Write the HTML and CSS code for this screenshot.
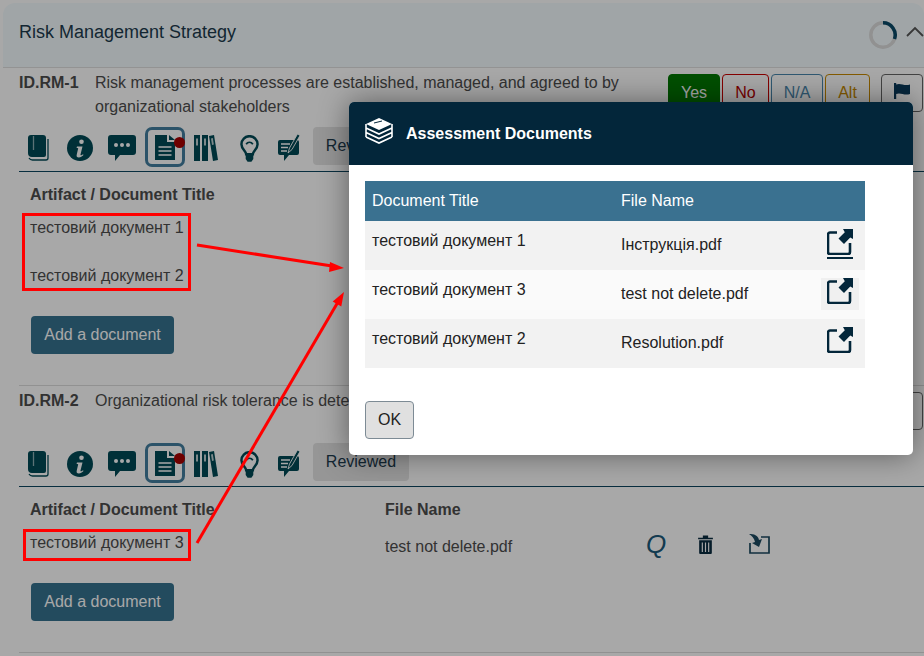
FILE: index.html
```html
<!DOCTYPE html>
<html lang="en">
<head>
<meta charset="utf-8">
<title>Risk Management Strategy</title>
<link rel="stylesheet" href="styles.css">
</head>
<body>
<svg width="0" height="0" class="defs">
  <defs>
    <symbol id="i-book" viewBox="0 0 21 26"><path d="M3 0h12a3 3 0 0 1 3 3v17a2 2 0 0 1-2 2H4a4 4 0 0 1-4-4V3a3 3 0 0 1 3-3z" fill="currentColor"/><path d="M5.500 1v14" stroke="#fff" stroke-width="1.300" opacity=".55"/><path d="M20 4v19a2 2 0 0 1-2 2H4.500a4 4 0 0 1-3.500-2" fill="none" stroke="currentColor" stroke-width="1.300"/></symbol>
    <symbol id="i-info" viewBox="0 0 26 26"><circle cx="13" cy="13" r="13" fill="currentColor"/><circle cx="14.500" cy="6.800" r="2.300" fill="#fff"/><path d="M10 11.500h5.500l-2 8c-.2.800.5 1 1 .7l1.500-1 .5.800c-1.500 1.600-3 2.500-4.700 2.500-1.800 0-2.500-1-2.100-2.700l1.500-6.500-1.700-.5z" fill="#fff"/></symbol>
    <symbol id="i-chat" viewBox="0 0 28 26"><path d="M3 0h22a3 3 0 0 1 3 3v14a3 3 0 0 1-3 3H12l-5 6v-6H3a3 3 0 0 1-3-3V3a3 3 0 0 1 3-3z" fill="currentColor"/><circle cx="8" cy="10" r="2" fill="#fff"/><circle cx="14" cy="10" r="2" fill="#fff"/><circle cx="20" cy="10" r="2" fill="#fff"/></symbol>
    <symbol id="i-doc" viewBox="0 0 20 25"><path d="M0 0h12v7h8v18H0z" fill="currentColor"/><path d="M14 0l6 5h-6z" fill="currentColor"/><path d="M3.500 12h13M3.500 16h13M3.500 20h13" stroke="#fff" stroke-width="1.600"/></symbol>
    <symbol id="i-lib" viewBox="0 0 24 26"><path d="M0 0h6v26H0zM8 0h6v26H8z" fill="currentColor"/><path d="M15 1l5-1 4 25-5 1z" fill="currentColor"/><path d="M2 3.500h2v7H2zM10 3.500h2v7h-2z" fill="#fff" opacity=".75"/><path d="M17 3.500l1.800-.4 1 6.500-1.800.4z" fill="#fff" opacity=".75"/></symbol>
    <symbol id="i-bulb" viewBox="0 0 20 28"><path d="M6.500 20c0-3-5-5.500-5-10.500a8.500 8.500 0 0 1 17 0c0 5-5 7.500-5 10.500z" fill="none" stroke="currentColor" stroke-width="2.600"/><path d="M6 20h8v5l-2 3H8l-2-3z" fill="currentColor"/><path d="M6.500 9.500a4 4 0 0 1 7 0" fill="none" stroke="currentColor" stroke-width="1.800"/></symbol>
    <symbol id="i-edit" viewBox="0 0 22 28"><path d="M2 7h17a2 2 0 0 1 2 2v11a2 2 0 0 1-2 2H11l-5 6v-6H2a2 2 0 0 1-2-2V9a2 2 0 0 1 2-2z" fill="currentColor"/><path d="M3 11h9M3 14.500h7M3 18h6" stroke="#fff" stroke-width="1.300"/><path d="M10 20l1.500-5L19.500 1l2.500 1.500-8 14z" fill="currentColor" stroke="#fff" stroke-width=".9"/></symbol>
    <symbol id="i-open" viewBox="0 0 26 26"><path d="M10 3.500H3a2 2 0 0 0-2 2V23a2 2 0 0 0 2 2h18a2 2 0 0 0 2-2V14" fill="none" stroke="currentColor" stroke-width="2.600"/><path d="M16 0h10v10l-2.800-1.500L17 15l-5.500-5.500 6.300-6.200z" fill="currentColor"/></symbol>
    <symbol id="i-flag" viewBox="0 0 16 16"><path d="M0 0h2.200v16H0z" fill="currentColor"/><path d="M2 1.500c5-2 8 2 14 0v9.500c-6 2-9-2-14 0z" fill="currentColor"/></symbol>
    <symbol id="i-trash" viewBox="0 0 14 18"><path d="M0 2.500h4.500V.5h5v2H14V4H0zM1 5h12v12a1 1 0 0 1-1 1H2a1 1 0 0 1-1-1z" fill="currentColor"/><path d="M4 7v9M7 7v9M10 7v9" stroke="#fff" stroke-width="1.100"/></symbol>
    <symbol id="i-import" viewBox="0 0 22 20"><path d="M13 3h8v16H2V9" fill="none" stroke="currentColor" stroke-width="1.700"/><path d="M1 0c5 0 9 1 10 6l3-1-3 8-7-4 3-1C6 4 4 2 1 0z" fill="currentColor"/></symbol>
  </defs>
</svg>

<main class="page">
  <header class="panel-head">
    <h1 class="panel-title">Risk Management Strategy</h1>
    <div class="panel-tools">
      <svg class="ring" width="28" height="28" viewBox="0 0 28 28"><circle cx="14" cy="14" r="12.200" fill="none" stroke="#dcdcdc" stroke-width="3.500"/><path d="M14 1.800A12.200 12.200 0 0 1 25.500 18" fill="none" stroke="#0a4a68" stroke-width="3.500"/></svg>
      <svg class="chevron" width="18" height="12" viewBox="0 0 18 12"><path d="M1 10l8-8 8 8" fill="none" stroke="#555" stroke-width="1.800"/></svg>
    </div>
  </header>

  <section class="item item-first">
    <div class="req">
      <strong class="req-code">ID.RM-1</strong>
      <p class="req-text">Risk management processes are established, managed, and agreed to by organizational stakeholders</p>
      <div class="answers">
        <button class="ans ans-yes">Yes</button>
        <button class="ans ans-no">No</button>
        <button class="ans ans-na">N/A</button>
        <button class="ans ans-alt">Alt</button>
        <button class="ans ans-flag"><svg width="16" height="16"><use href="#i-flag"/></svg></button>
      </div>
    </div>
    <div class="toolbar">
      <svg class="t-book" width="21" height="26"><use href="#i-book"/></svg>
      <svg class="t-info" width="26" height="26"><use href="#i-info"/></svg>
      <svg class="t-chat" width="28" height="26"><use href="#i-chat"/></svg>
      <span class="t-active"><svg width="20" height="25"><use href="#i-doc"/></svg><i class="dot"></i></span>
      <svg class="t-lib" width="24" height="26"><use href="#i-lib"/></svg>
      <svg class="t-bulb" width="19" height="27"><use href="#i-bulb"/></svg>
      <svg class="t-edit" width="22" height="28"><use href="#i-edit"/></svg>
      <button class="reviewed">Reviewed</button>
    </div>
    <div class="docs">
      <div class="doc-head"><b>Artifact / Document Title</b></div>
      <div class="doc-row"><span>тестовий документ 1</span></div>
      <div class="doc-row doc-row-next"><span>тестовий документ 2</span></div>
      <button class="add">Add a document</button>
    </div>
  </section>

  <section class="item">
    <div class="req">
      <strong class="req-code">ID.RM-2</strong>
      <p class="req-text">Organizational risk tolerance is determined and clearly expressed</p>
      <div class="answers">
        <button class="ans ans-yes">Yes</button>
        <button class="ans ans-no">No</button>
        <button class="ans ans-na">N/A</button>
        <button class="ans ans-alt">Alt</button>
        <button class="ans ans-flag"><svg width="16" height="16"><use href="#i-flag"/></svg></button>
      </div>
    </div>
    <div class="toolbar">
      <svg class="t-book" width="21" height="26"><use href="#i-book"/></svg>
      <svg class="t-info" width="26" height="26"><use href="#i-info"/></svg>
      <svg class="t-chat" width="28" height="26"><use href="#i-chat"/></svg>
      <span class="t-active"><svg width="20" height="25"><use href="#i-doc"/></svg><i class="dot"></i></span>
      <svg class="t-lib" width="24" height="26"><use href="#i-lib"/></svg>
      <svg class="t-bulb" width="19" height="27"><use href="#i-bulb"/></svg>
      <svg class="t-edit" width="22" height="28"><use href="#i-edit"/></svg>
      <button class="reviewed">Reviewed</button>
    </div>
    <div class="docs">
      <div class="doc-head"><b>Artifact / Document Title</b><b>File Name</b></div>
      <div class="doc-row">
        <span>тестовий документ 3</span><span class="doc-file">test not delete.pdf</span>
        <span class="doc-actions">
          <span class="act-q">Q</span>
          <svg class="act-trash" width="15" height="19"><use href="#i-trash"/></svg>
          <svg class="act-import" width="22" height="20"><use href="#i-import"/></svg>
        </span>
      </div>
      <button class="add">Add a document</button>
    </div>
  </section>
</main>

<div class="backdrop"></div>

<div class="modal">
  <div class="modal-head">
    <svg class="modal-icon" width="28" height="27" viewBox="0 0 28 27"><path d="M14 1l13 6-13 6L1 7z" fill="#fff"/><path d="M1 11l13 6 13-6M1 15.500l13 6 13-6M1 20l13 6 13-6M1 7v13M27 7v13" fill="none" stroke="#fff" stroke-width="1.600"/><path d="M9 6l8-2" stroke="#03263a" stroke-width="1"/></svg>
    <h2 class="modal-title">Assessment Documents</h2>
  </div>
  <div class="modal-body">
    <table class="tbl">
      <thead><tr><th class="c-title">Document Title</th><th class="c-file">File Name</th><th class="c-act"></th></tr></thead>
      <tbody>
        <tr><td class="cell-title">тестовий документ 1</td><td class="cell-file">Інструкція.pdf</td><td class="cell-act"><a class="open open-under"><svg width="26" height="26"><use href="#i-open"/></svg></a></td></tr>
        <tr><td class="cell-title">тестовий документ 3</td><td class="cell-file">test not delete.pdf</td><td class="cell-act"><a class="open open-hover"><svg width="26" height="26"><use href="#i-open"/></svg></a></td></tr>
        <tr><td class="cell-title">тестовий документ 2</td><td class="cell-file">Resolution.pdf</td><td class="cell-act"><a class="open"><svg width="26" height="26"><use href="#i-open"/></svg></a></td></tr>
      </tbody>
    </table>
    <button class="ok">OK</button>
  </div>
</div>

<div class="mark mark-a"></div>
<div class="mark mark-b"></div>
<svg class="arrows" width="924" height="656" viewBox="0 0 924 656">
  <path d="M197 245L332 266" stroke="#f00" stroke-width="3" fill="none"/>
  <path d="M344 268l-14-6-1 10z" fill="#f00"/>
  <path d="M197 543L338 302" stroke="#f00" stroke-width="3" fill="none"/>
  <path d="M344 292L341.300 306.500 332.700 301.500z" fill="#f00"/>
</svg>
</body>
</html>
```

FILE: styles.css
```css
* { box-sizing: border-box; }
html, body { margin: 0; padding: 0; height: 656px; overflow: hidden; background: #fff; }
body { font-family: "Liberation Sans", Arial, sans-serif; font-size: 16px; color: #4d4d4d; position: relative; }
.defs { position: absolute; }
button { font-family: inherit; font-size: 16px; cursor: pointer; }

.page { width: 924px; padding-top: 3px; overflow: hidden; }
.panel-head { height: 65px; display: flex; align-items: center; justify-content: space-between; background: #f3fbfe; border-bottom: 1px solid #e0e0e0; border-radius: 12px 12px 0 0; margin-left: 3px; padding-left: 16px; }
.panel-title { margin: 0 0 6px; font-size: 18px; font-weight: 400; color: #1c3a4d; }
.panel-tools { display: flex; align-items: center; gap: 9px; margin-right: 0; margin-bottom: 1px; }
.chevron { margin-bottom: 6px; }

.item { margin-left: 19px; border-bottom: 1px solid #ddd; padding-bottom: 31px; }
.req { display: grid; grid-template-columns: 76px 1fr auto; min-height: 57px; padding-top: 3px; line-height: 24px; }
.item-first .req { min-height: 59px; }
.req-code { color: #4d4d4d; }
.req-text { margin: 0; width: 540px; }
.answers { display: flex; margin-top: 3px; height: 38px; position: absolute; left: 668px; }
.ans { height: 38px; background: #fff; border: 1px solid; border-radius: 4px; padding: 0; margin-right: 2px; }
.ans-yes { width: 52px; background: #037803; border-color: #037803; color: #fff; }
.ans-no { width: 47px; border-color: #c00; color: #b80000; margin-right: 2px; }
.ans-na { width: 52px; border-color: #4a88ad; color: #4a88ad; margin-right: 2px; }
.ans-alt { width: 45px; border-color: #c88a00; color: #c88a00; margin-right: 11px; }
.ans-flag { width: 42px; border-color: #666; color: #0a3a5c; display: flex; align-items: center; justify-content: center; padding-bottom: 5px; }

.toolbar { height: 43px; display: flex; align-items: flex-start; color: #004a56; }
.item-first .toolbar { height: 44px; }
.toolbar > svg { margin-top: 8px; flex: none; }
.t-book { margin-left: 9px; }
.t-info { margin-left: 18px; }
.t-chat { margin-left: 15px; }
.t-active { width: 40px; height: 40px; margin-left: 9px; border: 3px solid #447fa0; border-radius: 7px; display: flex; align-items: center; justify-content: center; position: relative; flex: none; }
.dot { position: absolute; right: -3px; top: 7px; width: 11px; height: 11px; border-radius: 50%; background: #a80000; }
.t-lib { margin-left: 9px; }
.toolbar > .t-bulb { margin-left: 22px; margin-top: 8px; }
.toolbar > .t-edit { margin-left: 19px; margin-top: 6px; }
.reviewed { margin-left: 13px; width: 96px; height: 38px; background: #e4e4e4; border: 0; border-radius: 4px; color: #1c3a4d; }

.docs { border-top: 1px solid #0d4660; padding: 11px 0 0 11px; }
.doc-head { display: grid; grid-template-columns: 355px 1fr; line-height: 24px; margin-bottom: 9px; }
.doc-row { display: grid; grid-template-columns: 355px 261px 1fr; line-height: 24px; height: 24px; }
.doc-row-next { margin-top: 24px; }
.doc-file { padding-top: 4px; }
.doc-actions { display: flex; align-items: center; height: 24px; color: #1c5a7a; margin-top: 1px; }
.act-q { width: 52px; font-size: 26px; font-style: italic; line-height: 24px; }
.act-trash { margin-right: 35px; color: #0a2c40; }
.act-import { color: #1c4a60; }
.add { display: block; margin: 28px 0 0 1px; width: 143px; height: 38px; background: #36728f; color: #fff; border: 0; border-radius: 4px; }

.backdrop { position: absolute; inset: 0; background: rgba(0,0,0,.34); }

.modal { position: absolute; left: 349px; top: 102px; width: 564px; height: 353px; background: #fff; border-radius: 5px; box-shadow: 0 0 30px rgba(0,0,0,.45); overflow: hidden; }
.modal-head { height: 63px; background: #03263a; display: flex; align-items: center; padding-left: 16px; gap: 13px; color: #fff; }
.modal-icon { margin-top: -6px; }
.modal-title { margin: 1px 0 0; font-size: 16px; font-weight: 700; }
.modal-body { padding: 16px; }
.tbl { width: 500px; border-collapse: collapse; table-layout: fixed; color: #222; }
.tbl th { height: 40px; background: #3a7190; color: #fff; font-weight: 400; text-align: left; padding: 0 0 0 7px; }
.c-title { width: 249px; }
.c-file { width: 200px; }
.tbl td { height: 49px; padding: 0 0 0 7px; }
.tbl tbody tr { background: #f2f2f2; }
.tbl tbody tr:nth-child(2) { background: #fafafa; }
.tbl .cell-title { vertical-align: top; padding-top: 8px; line-height: 24px; }
.tbl .cell-file { vertical-align: top; padding-top: 12px; line-height: 24px; }
.tbl .cell-act { vertical-align: top; padding: 0; position: relative; }
.open { position: absolute; left: 13px; top: 8px; width: 26px; height: 30px; color: #03263a; display: block; }
.open-under { border-bottom: 2px solid #03263a; }
.open-hover { left: 7px; width: 38px; height: 32px; background: #f0f0f0; padding: 0 6px; }
.open svg { display: block; }
.ok { display: block; margin-top: 33px; width: 49px; height: 38px; background: #e0e0e0; border: 1px solid #7d8b95; border-radius: 4px; color: #222; padding: 0; }

.mark { position: absolute; border: 3px solid #f00; }
.mark-a { left: 22px; top: 213px; width: 169px; height: 78px; }
.mark-b { left: 23px; top: 529px; width: 168px; height: 32px; }
.arrows { position: absolute; left: 0; top: 0; pointer-events: none; }
```
